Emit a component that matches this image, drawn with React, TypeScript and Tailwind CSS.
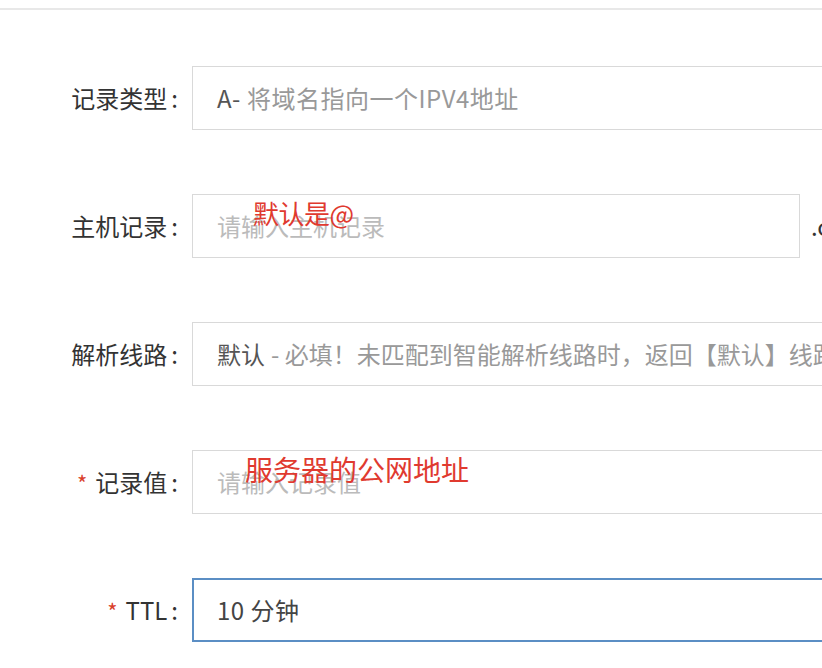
import React from 'react'

const font = { fontFamily: '"Noto Sans CJK SC", "Noto Sans", sans-serif' }

function Label({ text, required }: { text: string; required?: boolean }) {
  return (
    <div className="w-[178px] shrink-0 flex items-center justify-end text-[24px] text-[#333]">
      {required && <span className="text-[#d9402b] mr-[8px] text-[22px]">*</span>}
      <span>{text}</span>
      <span className="ml-[4px]">:</span>
    </div>
  )
}

export default function App() {
  return (
    <div className="w-[822px] h-[668px] overflow-hidden bg-white" style={font}>
      <div className="mt-[8px] h-[2px] bg-[#e8e8e8]"></div>

      <div className="pt-[56px] flex flex-col gap-[64px]">
        {/* 记录类型 */}
        <div className="flex items-stretch h-[64px]">
          <Label text="记录类型" />
          <div className="ml-[14px] w-[700px] shrink-0 border border-[#d9d9d9] flex items-center pl-[24px] text-[24px] tracking-[0.5px] whitespace-nowrap overflow-hidden">
            <span className="text-[#555]">A-</span>
            <span className="text-[#999] ml-[6px]">将域名指向一个IPV4地址</span>
          </div>
        </div>

        {/* 主机记录 */}
        <div className="flex items-stretch h-[64px]">
          <Label text="主机记录" />
          <div className="relative ml-[14px] w-[608px] shrink-0 border border-[#d9d9d9] flex items-center pl-[24px] text-[24px] text-[#bbb] whitespace-nowrap">
            请输入主机记录
            <span className="absolute left-[60px] top-[-2px] text-[26px] tracking-[-0.5px] text-[#e03a2f]">默认是@</span>
          </div>
          <div className="ml-[11px] flex items-center text-[24px] text-[#333] whitespace-nowrap">.com</div>
        </div>

        {/* 解析线路 */}
        <div className="flex items-stretch h-[64px]">
          <Label text="解析线路" />
          <div className="ml-[14px] w-[700px] shrink-0 border border-[#d9d9d9] flex items-center pl-[24px] text-[24px] whitespace-nowrap overflow-hidden">
            <span className="text-[#555]">默认</span>
            <span className="text-[#999] ml-[6px]">- 必填！未匹配到智能解析线路时，返回【默认】线路</span>
          </div>
        </div>

        {/* 记录值 */}
        <div className="relative flex items-stretch h-[64px]">
          <Label text="记录值" required />
          <div className="relative ml-[14px] w-[700px] shrink-0 border border-[#d9d9d9] flex items-center pl-[24px] text-[24px] text-[#bbb] whitespace-nowrap">
            请输入记录值
            <span className="absolute left-[52px] top-[-3px] text-[28px] text-[#e03a2f]">服务器的公网地址</span>
          </div>
        </div>

        {/* TTL */}
        <div className="flex items-stretch h-[64px]">
          <Label text="TTL" required />
          <div className="ml-[14px] w-[700px] shrink-0 border-2 border-[#5b8ec4] flex items-center pl-[23px] text-[24px] tracking-[0.5px] text-[#444] whitespace-nowrap">
            10 分钟
          </div>
        </div>
      </div>
    </div>
  )
}
